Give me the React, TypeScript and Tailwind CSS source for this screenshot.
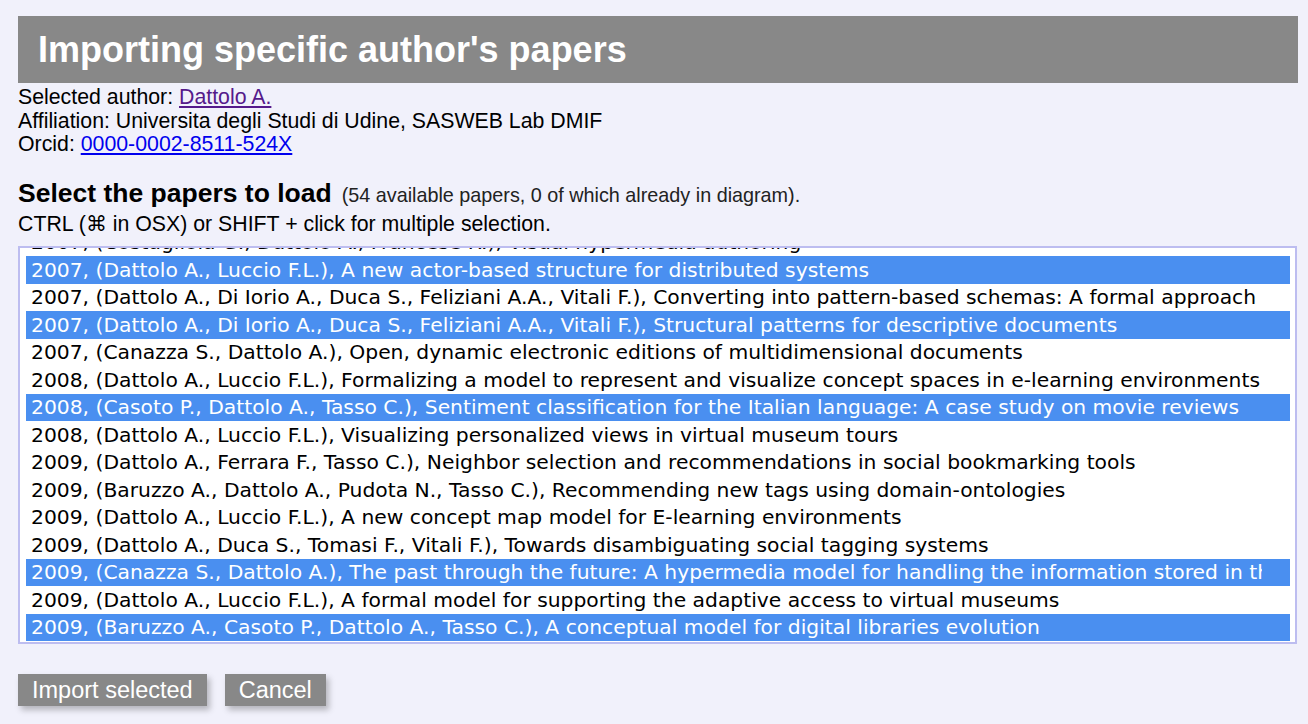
import React, { useEffect, useRef } from 'react';

type Paper = { text: string; selected?: boolean };

const papers: Paper[] = [
  { text: "2004, (Dattolo A., Loia V.), Distributed information and control in a concurrent hypermedia-oriented architecture" },
  { text: "2005, (Dattolo A., Luccio F.L.), A formal description of zz-structures" },
  { text: "2006, (Dattolo A., Di Iorio A., Duca S., Feliziani A.A., Vitali F.), Patterns for descriptive documents: a formal analysis" },
  { text: "2006, (Dattolo A., Luccio F.L.), Modelling volatile distributed systems" },
  { text: "2007, (Costagliola G., Dattolo A., Francese R.), Visual hypermedia authoring" },
  { text: "2007, (Dattolo A., Luccio F.L.), A new actor-based structure for distributed systems", selected: true },
  { text: "2007, (Dattolo A., Di Iorio A., Duca S., Feliziani A.A., Vitali F.), Converting into pattern-based schemas: A formal approach" },
  { text: "2007, (Dattolo A., Di Iorio A., Duca S., Feliziani A.A., Vitali F.), Structural patterns for descriptive documents", selected: true },
  { text: "2007, (Canazza S., Dattolo A.), Open, dynamic electronic editions of multidimensional documents" },
  { text: "2008, (Dattolo A., Luccio F.L.), Formalizing a model to represent and visualize concept spaces in e-learning environments" },
  { text: "2008, (Casoto P., Dattolo A., Tasso C.), Sentiment classification for the Italian language: A case study on movie reviews", selected: true },
  { text: "2008, (Dattolo A., Luccio F.L.), Visualizing personalized views in virtual museum tours" },
  { text: "2009, (Dattolo A., Ferrara F., Tasso C.), Neighbor selection and recommendations in social bookmarking tools" },
  { text: "2009, (Baruzzo A., Dattolo A., Pudota N., Tasso C.), Recommending new tags using domain-ontologies" },
  { text: "2009, (Dattolo A., Luccio F.L.), A new concept map model for E-learning environments" },
  { text: "2009, (Dattolo A., Duca S., Tomasi F., Vitali F.), Towards disambiguating social tagging systems" },
  { text: "2009, (Canazza S., Dattolo A.), The past through the future: A hypermedia model for handling the information stored in the audio documents", selected: true },
  { text: "2009, (Dattolo A., Luccio F.L.), A formal model for supporting the adaptive access to virtual museums" },
  { text: "2009, (Baruzzo A., Casoto P., Dattolo A., Tasso C.), A conceptual model for digital libraries evolution", selected: true },
  { text: "2010, (Dattolo A., Ferrara F., Tasso C.), The role of tags for recommendation: a survey" },
  { text: "2010, (Dattolo A., Luccio F.L., Pirone E.), Webpage browsing and navigation using zz-structures" },
];

const sans = "font-['Liberation_Sans',Arial,sans-serif]";

export default function App() {
  const listRef = useRef<HTMLDivElement>(null);

  // scroll the list so the 2007 actor-based paper is the first full row
  useEffect(() => {
    if (listRef.current) listRef.current.scrollTop = 5 * 27.5 - 9;
  }, []);

  return (
    <div className={`min-h-screen bg-[#f1f1fb] pt-4 pl-[18px] pr-[10px] ${sans}`}>
      {/* Header */}
      <div className="h-[67px] bg-[#888888] flex items-center pl-5">
        <h1 className="text-[36px] font-bold text-white leading-none">Importing specific author's papers</h1>
      </div>

      {/* Author info */}
      <div className="mt-[3px] text-[21.3px] leading-[23.5px] text-black">
        <div>
          Selected author: <a href="#" className="text-[#551a8b] underline">Dattolo A.</a>
        </div>
        <div>Affiliation: Universita degli Studi di Udine, SASWEB Lab DMIF</div>
        <div>
          Orcid: <a href="#" className="text-[#0000ee] underline">0000-0002-8511-524X</a>
        </div>
      </div>

      {/* Select heading */}
      <div className="mt-[21px] flex items-baseline gap-[10px] leading-[30px]">
        <span className="text-[26.5px] font-bold text-black">Select the papers to load</span>
        <span className="text-[19.8px] text-[#222]">(54 available papers, 0 of which already in diagram).</span>
      </div>
      <div className="mt-[2px] text-[21.3px] leading-[24px] text-black">
        CTRL (⌘ in OSX) or SHIFT + click for multiple selection.
      </div>

      {/* Paper list */}
      <div
        ref={listRef}
        className="mt-[10px] w-[1279px] h-[398px] border-2 border-[#bdbdf0] bg-white overflow-hidden pl-[6px] pr-[5px] font-['DejaVu_Sans',Verdana,sans-serif] text-[20.3px]"
      >
        {papers.map((p, i) => (
          <div
            key={i}
            className={`h-[27.5px] flex items-center pl-[5px] pr-[28px] ${
              p.selected ? 'bg-[#4a8ff0] text-white' : 'text-black'
            }`}
          >
            <div className="overflow-hidden whitespace-nowrap">{p.text}</div>
          </div>
        ))}
      </div>

      {/* Buttons */}
      <div className="mt-[30px] flex gap-[18px]">
        <button className="h-8 px-[14px] bg-[#888888] text-white text-[23.5px] leading-8 shadow-[3px_4px_6px_rgba(0,0,0,0.25)]">
          Import selected
        </button>
        <button className="h-8 px-[14px] bg-[#888888] text-white text-[23.5px] leading-8 shadow-[3px_4px_6px_rgba(0,0,0,0.25)]">
          Cancel
        </button>
      </div>
    </div>
  );
}
